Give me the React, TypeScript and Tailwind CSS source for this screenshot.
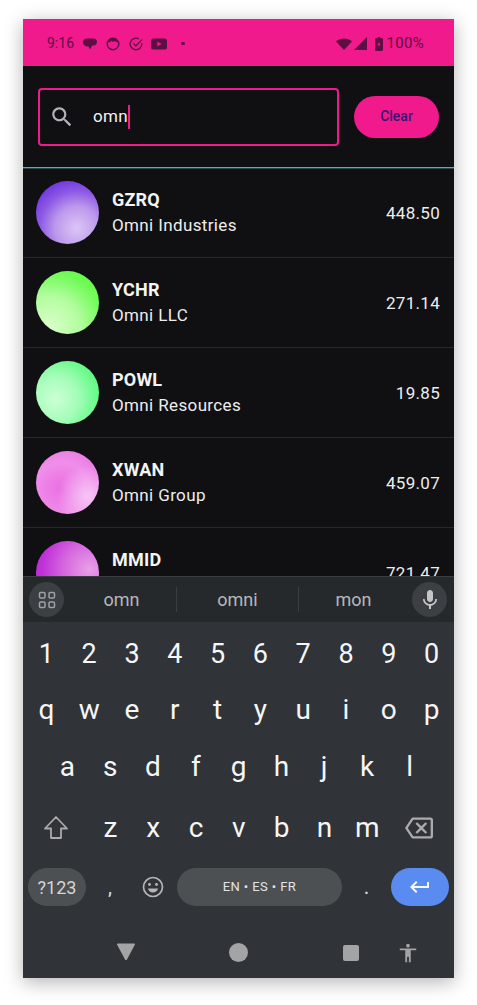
const stocks = [
  {
    ticker: "GZRQ",
    name: "Omni Industries",
    price: "448.50",
    avatar: "bg-[radial-gradient(circle_at_65%_75%,#dcc6f6_0%,#bd98ec_35%,#8c58e4_60%,#6a30e0_85%)]",
  },
  {
    ticker: "YCHR",
    name: "Omni LLC",
    price: "271.14",
    avatar: "bg-[radial-gradient(circle_at_22%_88%,#d8ffc8_0%,#b4fda0_40%,#72fb58_72%,#58fb3c_100%)]",
  },
  {
    ticker: "POWL",
    name: "Omni Resources",
    price: "19.85",
    avatar: "bg-[radial-gradient(circle_at_30%_60%,#ccffd6_0%,#a4fdb8_40%,#6cfb8c_70%,#48f870_100%)]",
  },
  {
    ticker: "XWAN",
    name: "Omni Group",
    price: "459.07",
    avatar: "bg-[radial-gradient(circle_at_82%_72%,#f6c4f6_0%,transparent_45%),radial-gradient(circle_at_40%_60%,#ea6ee2_0%,#f08eea_50%,#e66ede_100%)]",
  },
  {
    ticker: "MMID",
    name: "",
    price: "721.47",
    avatar: "bg-[radial-gradient(circle_at_85%_45%,#e8a0e8_0%,#d668de_40%,#c030d8_75%,#b82cd4_100%)]",
  },
];

const digits = ["1", "2", "3", "4", "5", "6", "7", "8", "9", "0"];
const rowOne = ["q", "w", "e", "r", "t", "y", "u", "i", "o", "p"];
const rowTwo = ["a", "s", "d", "f", "g", "h", "j", "k", "l"];
const rowThree = ["z", "x", "c", "v", "b", "n", "m"];

function Key({ label }: { label: string }) {
  return <div className="flex w-[42.8px] items-center justify-center">{label}</div>;
}

function StatusBar() {
  return (
    <div className="flex h-[47px] shrink-0 items-center justify-between bg-[#f01a8c] pt-[2px] pl-6 pr-[30px] text-[14px] text-[#5c0f42]">
      <div className="flex items-center">
        <span className="w-[26px]">9:16</span>
        <svg className="ml-[10px]" width="14" height="14" viewBox="0 0 14 14" fill="#5c0f42">
          <path d="M4 1.500h6.500C12.500 1.500 14 3 14 5s-1.500 3.600-3.500 3.600H9.200L7 12.500 5.600 9.400H4C1.800 9.200 0 7.400 0 5.300S1.800 1.500 4 1.500z" />
        </svg>
        <svg className="ml-[9px]" width="14" height="14" viewBox="0 0 14 14" fill="none" stroke="#5c0f42" strokeWidth="1.400">
          <circle cx="7" cy="7" r="5.800" />
          <path d="M2 5c1.500 .6 3-.2 3.400-1.300C6 5 8 5 8.800 3.700 9.400 5 11 5.400 12 5L10 1.500H4z" fill="#5c0f42" stroke="none" />
        </svg>
        <svg className="ml-[9px]" width="14" height="14" viewBox="0 0 14 14" fill="none" stroke="#5c0f42" strokeWidth="1.300">
          <path d="M12.700 6.200A5.800 5.800 0 1 1 9.800 1.900" />
          <path d="M4.400 6.400 6.900 8.900 13 2.600" />
        </svg>
        <svg className="ml-2" width="16" height="12" viewBox="0 0 16 12">
          <rect width="16" height="11" y="0.500" rx="2.500" fill="#5c0f42" />
          <path d="M6.300 3.400 10.600 6 6.300 8.600z" fill="#f01a8c" />
        </svg>
        <span className="ml-[14px] h-[3.5px] w-[3.5px] rounded-full bg-[#5c0f42]" />
      </div>
      <div className="flex items-center">
        <svg width="16" height="12" viewBox="0 0 16 12" fill="#5c0f42">
          <path d="M8 12 0 3.600C4.400-.7 11.600-.7 16 3.600z" />
        </svg>
        <svg className="ml-[2px]" width="13" height="13" viewBox="0 0 13 13" fill="#5c0f42">
          <path d="M13 0v13H0z" />
        </svg>
        <svg className="ml-2" width="8" height="14" viewBox="0 0 8 14">
          <path d="M2.600 0h2.800v1.200h1.400c.7 0 1.200.5 1.200 1.200v10.400c0 .7-.5 1.200-1.200 1.200H1.200C.5 14 0 13.500 0 12.800V2.400c0-.7.500-1.200 1.200-1.200h1.400z" fill="#5c0f42" />
          <path d="M4.500 4 2.500 8h1.300l-.300 2.500 2-3.700H4.200z" fill="#f01a8c" />
        </svg>
        <span className="ml-[4px] text-[15px] tracking-[0.3px]">100%</span>
      </div>
    </div>
  );
}

function SearchBar() {
  return (
    <div className="flex h-[102px] shrink-0 items-center gap-[15px] border-b border-[#49b5ba] px-[15px]">
      <div className="flex h-[58px] w-[301px] items-center rounded-[4px] border-2 border-[#f01a8c]">
        <svg className="ml-[9px]" width="26" height="26" viewBox="0 0 24 24" fill="#b4b4b8">
          <path d="M15.500 14h-.79l-.28-.27C15.410 12.590 16 11.110 16 9.500 16 5.910 13.090 3 9.500 3S3 5.910 3 9.500 5.910 16 9.500 16c1.610 0 3.090-.59 4.230-1.570l.27.28v.79l5 4.990L20.490 19l-4.990-5zm-6 0C7.010 14 5 11.990 5 9.500S7.010 5 9.500 5 14 7.010 14 9.500 11.990 14 9.500 14z" />
        </svg>
        <span className="ml-[18px] text-[17px] tracking-[0.3px] text-[#f2f2f2]">omn</span>
        <span className="h-[24px] w-[2px] bg-[#f01a8c]" />
      </div>
      <button className="h-[42px] w-[85px] rounded-full bg-[#f01a8c] text-[14px] font-medium text-[#3a1070]">Clear</button>
    </div>
  );
}

function StockRow({ stock }: { stock: (typeof stocks)[number] }) {
  return (
    <div className="flex h-[90px] shrink-0 items-center border-b border-[#27272e] pl-[13px] pr-[14px]">
      <div className={`h-[63px] w-[63px] shrink-0 rounded-full ${stock.avatar}`} />
      <div className="ml-[13px] flex-1">
        <div className="text-[18px] leading-[24px] font-bold tracking-[0.2px] text-[#f4f4f4]">{stock.ticker}</div>
        <div className="mt-[1px] h-[24px] text-[17px] leading-[24px] tracking-[0.37px] text-[#ededed]">{stock.name}</div>
      </div>
      <div className="pt-[2px] text-[17px] tracking-[0.3px] text-[#ededed]">{stock.price}</div>
    </div>
  );
}

function Keyboard() {
  return (
    <div className="flex h-[402px] shrink-0 flex-col bg-[#303338] text-[27px] text-[#f6f6f6]">
      <div className="flex h-[46px] shrink-0 items-center border-t border-[#3a3d41] bg-[#26292c] px-[6px] text-[18px] text-[#b5b8ba]">
        <div className="flex h-[35px] w-[35px] items-center justify-center rounded-full bg-[#3c3f43]">
          <svg width="18" height="18" viewBox="0 0 18 18" fill="none" stroke="#9fa2a5" strokeWidth="1.500">
            <rect x="1.500" y="1.500" width="5.500" height="5.500" rx="1.200" />
            <rect x="11" y="1.500" width="5.500" height="5.500" rx="1.200" />
            <rect x="1.500" y="11" width="5.500" height="5.500" rx="1.200" />
            <rect x="11" y="11" width="5.500" height="5.500" rx="1.200" />
          </svg>
        </div>
        <div className="flex w-[112px] justify-center pl-[3px]">omn</div>
        <div className="h-[25px] w-px bg-[#3a3d41]" />
        <div className="flex w-[121px] justify-center">omni</div>
        <div className="h-[25px] w-px bg-[#3a3d41]" />
        <div className="flex w-[113px] justify-center pr-[4px]">mon</div>
        <div className="flex h-[35px] w-[35px] items-center justify-center rounded-full bg-[#3c3f43]">
          <svg width="24" height="24" viewBox="0 0 24 24" fill="#c4c6c8">
            <path d="M12 14c1.660 0 3-1.340 3-3V5c0-1.660-1.340-3-3-3S9 3.340 9 5v6c0 1.660 1.340 3 3 3zm5.300-3c0 3-2.540 5.100-5.300 5.100S6.700 14 6.700 11H5c0 3.410 2.720 6.230 6 6.720V21h2v-3.280c3.280-.48 6-3.300 6-6.720h-1.700z" />
          </svg>
        </div>
      </div>

      <div className="flex h-[65px] shrink-0 items-center pl-[2px] pr-[1px]">
        {digits.map((d) => (
          <Key key={d} label={d} />
        ))}
      </div>
      <div className="flex h-[45px] shrink-0 items-center pl-[2px] pr-[1px] text-[28px]">
        {rowOne.map((k) => (
          <Key key={k} label={k} />
        ))}
      </div>
      <div className="flex h-[70px] shrink-0 items-center pl-[23px] text-[28px]">
        {rowTwo.map((k) => (
          <Key key={k} label={k} />
        ))}
      </div>
      <div className="flex h-[52px] shrink-0 items-center text-[28px]">
        <div className="flex w-[66px] items-center justify-center">
          <svg width="26" height="26" viewBox="0 0 26 26" fill="none" stroke="#a9abad" strokeWidth="1.800" strokeLinejoin="round">
            <path d="M13 2 2 13.500h6V23h10v-9.500h6z" />
          </svg>
        </div>
        {rowThree.map((k) => (
          <Key key={k} label={k} />
        ))}
        <div className="flex w-[60px] items-center justify-center">
          <svg width="28" height="28" viewBox="0 0 24 24" fill="#a9abad" preserveAspectRatio="none">
            <path d="M22 3H7c-.69 0-1.230.35-1.590.88L0 12l5.410 8.110c.36.53.9.89 1.590.89h15c1.100 0 2-.9 2-2V5c0-1.100-.9-2-2-2zm0 16H7.070L2.400 12l4.660-7H22v14zm-11.590-2L14 13.410 17.590 17 19 15.590 15.410 12 19 8.410 17.590 7 14 10.590 10.410 7 9 8.410 12.590 12 9 15.590z" />
          </svg>
        </div>
      </div>

      <div className="flex h-[66px] shrink-0 items-center px-[5px]">
        <div className="flex h-[38px] w-[58px] items-center justify-center rounded-full bg-[#4c5053] text-[18px] text-[#d4d5d6]">?123</div>
        <div className="flex w-[48px] justify-center text-[18px] font-medium text-[#d8d8d8]">,</div>
        <div className="flex w-[38px] items-center justify-center">
          <svg width="22" height="22" viewBox="0 0 22 22" fill="none" stroke="#b4b6b8" strokeWidth="1.700">
            <circle cx="11" cy="11" r="9.500" />
            <circle cx="7.500" cy="8.500" r="1.400" fill="#b4b6b8" stroke="none" />
            <circle cx="14.500" cy="8.500" r="1.400" fill="#b4b6b8" stroke="none" />
            <path d="M6 12.500h10c-.6 2.500-2.700 4-5 4s-4.400-1.500-5-4z" fill="#b4b6b8" stroke="none" />
          </svg>
        </div>
        <div className="ml-[5px] flex h-[38px] w-[165px] items-center justify-center rounded-full bg-[#4c5053] text-[13px] tracking-[0.4px] text-[#e4e4e4]">EN • ES • FR</div>
        <div className="flex w-[49px] justify-center text-[18px] font-medium text-[#d8d8d8]">.</div>
        <div className="flex h-[38px] w-[58px] items-center justify-center rounded-full bg-[#5a8bf0]">
          <svg width="24" height="24" viewBox="0 0 24 24" fill="#f6f8fc">
            <path d="M19 7v4H5.830l3.580-3.590L8 6l-6 6 6 6 1.410-1.410L5.830 13H21V7z" />
          </svg>
        </div>
      </div>

      <div className="flex flex-1 items-start">
        <svg className="mt-[22px] ml-[93px]" width="20" height="20" viewBox="0 0 20 20" fill="#a2a4a6">
          <path d="M1 2.500C1 1.800 1.500 1.500 2 1.500h16c.6 0 1.100.4 .8 1.200L11 17.500c-.5.8-1.500.8-2 0z" />
        </svg>
        <div className="mt-[23px] ml-[93px] h-[19px] w-[19px] rounded-full bg-[#a2a4a6]" />
        <div className="mt-[25px] ml-[95px] h-[16px] w-[16px] rounded-[2px] bg-[#a2a4a6]" />
        <svg className="mt-[22px] ml-[38px]" width="22" height="22" viewBox="0 0 24 24" fill="#a2a4a6">
          <path d="M12 2c1.100 0 2 .9 2 2s-.9 2-2 2-2-.9-2-2 .9-2 2-2zm9 7h-6v13h-2v-6h-2v6H9V9H3V7h18v2z" />
        </svg>
      </div>
    </div>
  );
}

export default function App() {
  return (
    <div className="min-h-[1005px] bg-white pt-[19px] pl-[23px] font-['Roboto',sans-serif]">
      <div className="flex h-[959px] w-[431px] flex-col overflow-hidden bg-[#101013] shadow-[0_4px_18px_rgba(0,0,0,0.3)]">
        <StatusBar />
        <SearchBar />
        <div className="flex min-h-0 flex-1 flex-col overflow-hidden shadow-[inset_0_1px_0_#1f4a50]">
          {stocks.map((s) => (
            <StockRow key={s.ticker} stock={s} />
          ))}
        </div>
        <Keyboard />
      </div>
    </div>
  );
}
